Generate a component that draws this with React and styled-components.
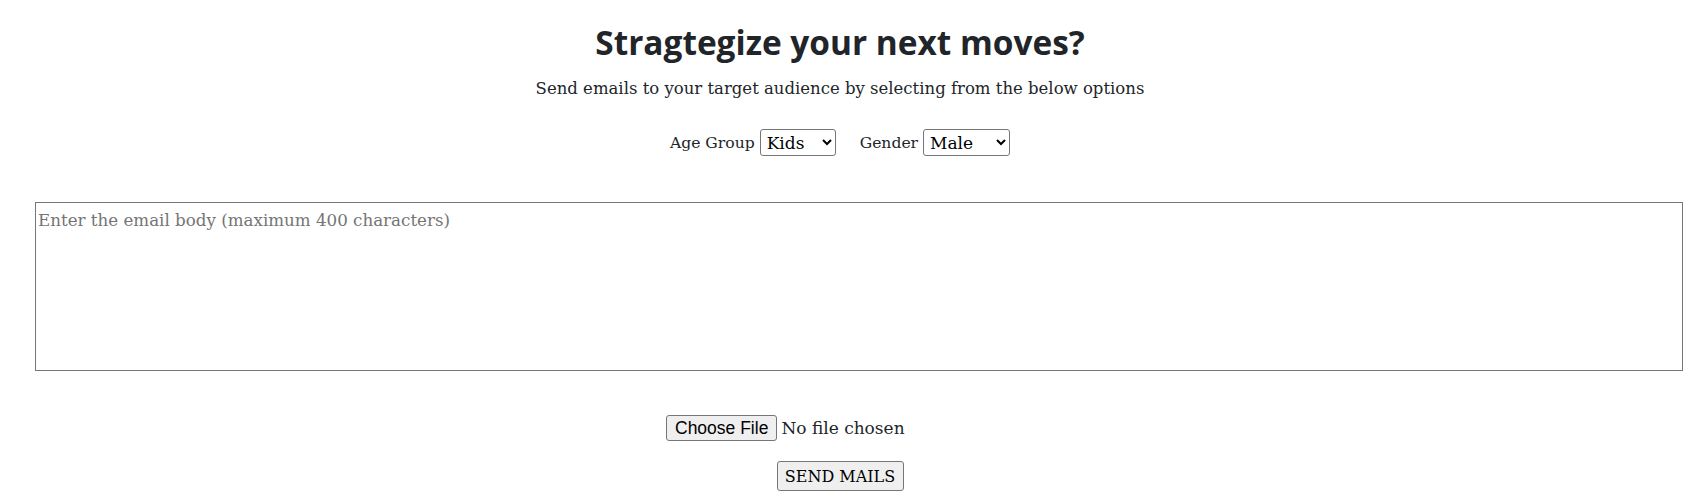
import React from "react";
import styled, { createGlobalStyle } from "styled-components";

const Global = createGlobalStyle`
  html, body { margin: 0; padding: 0; background: #fff; }
  body { font-family: "DejaVu Serif", "Liberation Serif", serif; color: #212529; }
`;

const Page = styled.div`
  width: 1680px;
  text-align: center;
`;

const Title = styled.h1`
  font-family: "Open Sans", "DejaVu Sans", sans-serif;
  font-weight: 700;
  font-size: 33.4px;
  line-height: 40px;
  margin: 22px 0 15px;
  color: #212529;
`;

const Sub = styled.p`
  font-size: 16.5px;
  line-height: 24px;
  margin: 0 0 28px;
`;

const Filters = styled.div`
  display: flex;
  justify-content: center;
  align-items: center;
  gap: 24px;
  font-size: 15.6px;
`;

const Field = styled.label`
  display: flex;
  align-items: center;
  gap: 5px;
`;

const Select = styled.select`
  font-family: inherit;
  font-size: 17px;
  height: 27px;
  width: ${(p) => p.$w}px;
  color: #000;
  background: #fff;
  border: 1px solid #767676;
  border-radius: 3px;
  padding: 0 2px;
`;

const Body = styled.textarea`
  display: block;
  box-sizing: border-box;
  margin: 46px 0 0 35px;
  width: 1648px;
  height: 169px;
  border: 1px solid #767676;
  font-family: inherit;
  font-size: 16.7px;
  padding: 7px 2px 4px;
  resize: none;
  &::placeholder { color: #757575; }
`;

const FileRow = styled.div`
  margin-top: 44px;
  display: flex;
  justify-content: center;
`;

const FileInput = styled.input`
  width: 348px;
  font-family: inherit;
  font-size: 17px;
  color: #212529;
  &::file-selector-button {
    font-family: "Liberation Sans", Arial, sans-serif;
    font-size: 17.5px;
    height: 26px;
    padding: 0 8px;
    margin-right: 4px;
    background: #efefef;
    border: 1px solid #767676;
    border-radius: 3px;
    color: #000;
  }
`;

const SendRow = styled.div`
  margin-top: 20px;
  display: flex;
  justify-content: center;
`;

const Send = styled.button`
  font-family: inherit;
  font-size: 16px;
  white-space: nowrap;
  width: 127px;
  height: 30px;
  padding: 0;
  background: #efefef;
  border: 1px solid #767676;
  border-radius: 3px;
  color: #000;
`;

export default function App() {
  return (
    <>
      <Global />
      <Page>
        <Title>Stragtegize your next moves?</Title>
        <Sub>Send emails to your target audience by selecting from the below options</Sub>
        <Filters>
          <Field>
            Age Group
            <Select $w={76} defaultValue="Kids">
              <option>Kids</option>
              <option>Teens</option>
              <option>Adults</option>
            </Select>
          </Field>
          <Field>
            Gender
            <Select $w={87} defaultValue="Male">
              <option>Male</option>
              <option>Female</option>
            </Select>
          </Field>
        </Filters>
        <Body placeholder="Enter the email body (maximum 400 characters)" />
        <FileRow>
          <FileInput type="file" />
        </FileRow>
        <SendRow>
          <Send>SEND MAILS</Send>
        </SendRow>
      </Page>
    </>
  );
}
